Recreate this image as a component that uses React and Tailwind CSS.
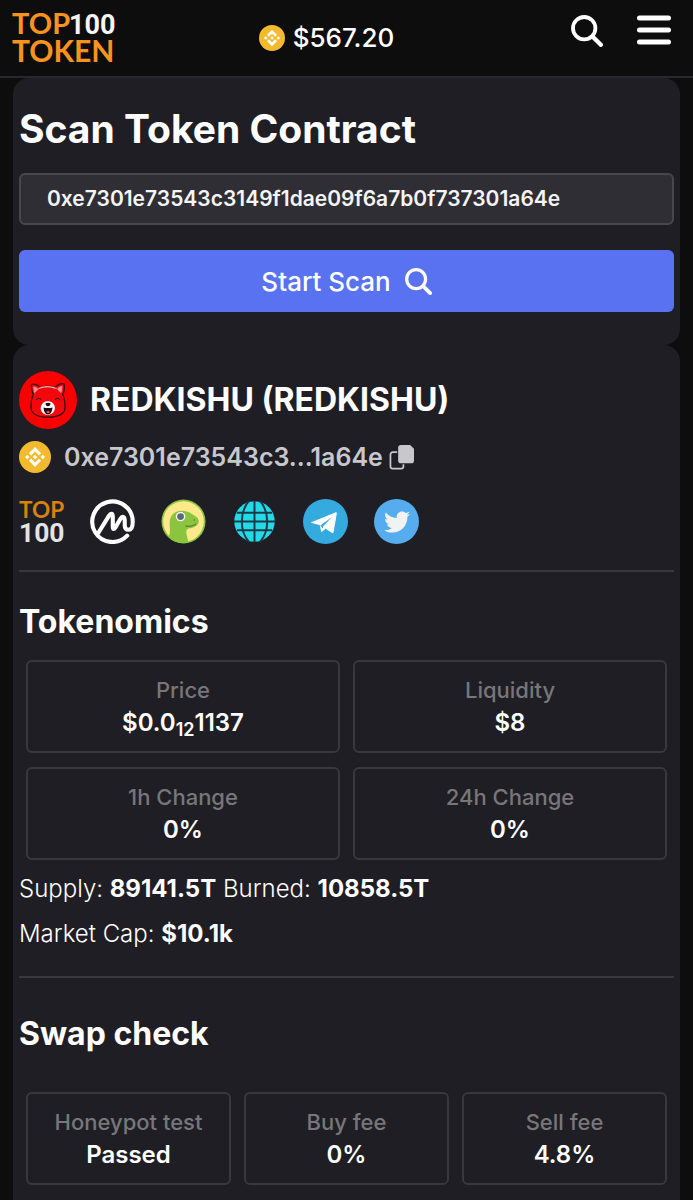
import { FaTwitter } from "react-icons/fa";

function SearchIcon({ className }) {
  return (
    <svg viewBox="0 0 32 32" fill="none" stroke="currentColor" strokeLinecap="round" className={className} aria-hidden="true">
      <circle cx="13.200" cy="13.200" r="11.200" strokeWidth="3.800" />
      <path d="M21.500 21.500 29.800 29.800" strokeWidth="4.300" />
    </svg>
  );
}

function MenuIcon() {
  return (
    <svg viewBox="0 0 34 30" fill="none" stroke="currentColor" strokeWidth="5" strokeLinecap="round" className="h-[30px] w-[34px]" aria-hidden="true">
      <path d="M2.500 3h29M2.500 15h29M2.500 27h29" />
    </svg>
  );
}

function BnbIcon({ className }) {
  return (
    <svg viewBox="0 0 32 32" className={className} aria-hidden="true">
      <circle cx="16" cy="16" r="16" fill="#f3ba2f" />
      <path
        fill="#fff"
        d="M12.116 14.404 16 10.52l3.886 3.886 2.26-2.26L16 6l-6.144 6.144 2.26 2.26zM6 16l2.26-2.26L10.52 16l-2.26 2.26L6 16zm6.116 1.596L16 21.48l3.886-3.886 2.26 2.259L16 26l-6.144-6.144-.003-.003 2.263-2.257zM21.48 16l2.26-2.26L26 16l-2.26 2.26L21.48 16zm-3.188-.002h.002V16L16 18.294l-2.291-2.29-.004-.004.004-.003.401-.402.195-.195L16 13.706l2.293 2.293z"
      />
    </svg>
  );
}

function Logo() {
  return (
    <svg viewBox="0 0 102 54" className="h-[54px] w-[102px] overflow-visible" fontFamily="Lato, sans-serif">
      <text x="0" y="22" fontSize="29" fontWeight="700" fill="#f7931e">TOP</text>
      <text x="57" y="22" fontSize="27" fontWeight="700" fontFamily="Roboto, sans-serif" fill="#f5f5f5">100</text>
      <text x="0" y="50" fontSize="30" fontWeight="700" fill="#f7931e">TOKEN</text>
    </svg>
  );
}

function Top100Icon() {
  return (
    <svg viewBox="0 0 46 46" className="size-[45px] overflow-visible" aria-hidden="true">
      <text x="0" y="19" fontSize="23" fontWeight="700" fontFamily="Lato, sans-serif" fill="#d9820f">TOP</text>
      <text x="0" y="44" fontSize="27" fontWeight="700" fontFamily="Roboto, sans-serif" fill="#e4e4e6">100</text>
    </svg>
  );
}

function TokenAvatar() {
  return (
    <svg viewBox="0 0 58 58" className="size-[58px]" aria-hidden="true">
      <circle cx="29" cy="29" r="29" fill="#fb0000" />
      <path
        d="M12.500 13.500c3-1.300 7 1 9 3.200 4.500-1.700 10-1.700 14.500 0 2.500-2.700 6-4.700 9-3.700.8 4 .2 7.500-1.300 10.500 1.800 4 2.500 9 2.300 13.500-.2 6-7.500 9.200-17 9.200s-16.800-3-17-9.200c-.2-5 .5-9.500 2.300-13.500-1.500-3-2.300-6.500-1.800-10z"
        fill="#f5060c"
        stroke="#2b0508"
        strokeWidth="1.200"
      />
      <path d="M14.500 15.500c2 0 3.700 1.300 5 2.700l-4 4c-.9-2-1.300-4.400-1-6.700zM43.300 15c-2 0-4 1.300-5.200 2.900l4 4.300c1-2 1.400-4.900 1.200-7.200z" fill="#f58f8f" />
      <path d="M19.500 17.500c6-2.500 12-2.500 18 0" fill="none" stroke="#ffb3b3" strokeWidth="1.200" />
      <path d="M17 29c1.500-2 4-2 5.300-.3M36 28.700c1.500-1.800 4-1.700 5.300.3" fill="none" stroke="#2b0508" strokeWidth="1" />
      <path d="M24 32c1.500-2.500 8-2.500 9.800 0 2.500 2.500 2.800 6 1 8.500-2.800 4.500-9.500 4.500-12.200 0-1.600-2.500-1.200-6 1.400-8.500z" fill="#fff" />
      <path d="M26.500 32.500c1.500-1 3.500-1 5 0 .3 1.500-1.500 2.800-2.500 2.800s-2.800-1.300-2.500-2.800zM24.500 36.500c3 .7 6 .7 9 0-.2 3.500-1.700 7-4.500 7s-4.300-3.500-4.500-7z" fill="#1d0b10" />
      <path d="M27.300 40.700c1-1 2.500-1 3.500 0-.5 1.800-3 1.800-3.500 0z" fill="#f0626c" />
    </svg>
  );
}

function CoinMarketCapIcon() {
  return (
    <svg viewBox="0 0 46 46" className="size-[45px]" fill="none" stroke="#fff" strokeWidth="4.200" strokeLinecap="round" strokeLinejoin="round" aria-hidden="true">
      <path d="M38 37.500A20.700 20.700 0 1 1 43.700 23c0 6.500-1.700 8.500-4.200 8.500s-4-1.700-4-4.500v-5c0-4.500-2.500-5-4.500-1.500l-5 8.500c-1.500 2.500-2.700 2-2.700-.7v-10c0-4-2-4.300-4-1L8 35.500" />
    </svg>
  );
}

function CoinGeckoIcon() {
  return (
    <svg viewBox="0 0 46 46" className="size-[45px]" aria-hidden="true">
      <circle cx="23" cy="23" r="22.500" fill="#8bc53f" />
      <circle cx="23" cy="23" r="20.800" fill="#ffe98b" />
      <path d="M8 38.500c2-5 .8-9 .8-14 0-7.500 5-12.500 12-12.500 4 0 7.500.8 10.500 3 3 2.200 7 3.500 7.300 7.500.3 4.500-4.600 6.500-9.100 7.500-3 .6-4 2-3.500 5 .4 3.500 1.500 6 2 9C20 46 11.500 43.500 8 38.500z" fill="#8bc53f" />
      <path d="M25 27.500c4 1 8 .3 11-2.200" fill="none" stroke="#4d6b2b" strokeWidth="1" />
      <circle cx="20" cy="18" r="4.800" fill="#fff" />
      <circle cx="20" cy="18" r="3.500" fill="#5a6875" />
      <circle cx="34" cy="21.500" r=".7" fill="#4d6b2b" />
    </svg>
  );
}

function GlobeIcon() {
  return (
    <svg viewBox="0 0 46 46" className="size-[45px]" aria-hidden="true">
      <circle cx="23" cy="23" r="20.700" fill="#26d9e8" />
      <g fill="none" stroke="#1a3a45" strokeWidth="2">
        <path d="M23 2v42M2 23h42M5 14h36M5 32h36" />
        <path d="M17.500 2c-10 11-10 31 0 42M28.500 2c10 11 10 31 0 42" />
      </g>
    </svg>
  );
}

function TelegramIcon() {
  return (
    <svg viewBox="0 0 46 46" className="size-[45px]" aria-hidden="true">
      <circle cx="23" cy="23" r="23" fill="#34aadf" />
      <path d="M9 23.500 33 13.700c1-.4 1.700.1 1.500 1.300l-3.200 18.700c-.2 1.300-1 1.600-2 .9l-10.800-7.600L9 24.600c-.9-.3-.9-.8 0-1.100z" fill="#fff" />
      <path d="M17.300 26.500 29.500 18.700 21 28.200 23.200 30.200 19.800 33.300c-.8.700-1.400.4-1.500-.7z" fill="#fff" />
      <path d="M17.800 26.800 29.500 18.700 20.800 27.500 20 30.500z" fill="#34aadf" />
    </svg>
  );
}

function TwitterIcon() {
  return (
    <span className="flex size-[45px] items-center justify-center rounded-full bg-[#55acee]">
      <FaTwitter className="size-[26px] text-[#f1f2f2]" aria-hidden="true" />
    </span>
  );
}

function CopyIcon() {
  return (
    <svg viewBox="0 0 26 26" className="size-[25px]" aria-hidden="true">
      <path d="M8.500 7.500H4a2.500 2.500 0 0 0-2.500 2.500v12A2.500 2.500 0 0 0 4 24.500h8.500A2.500 2.500 0 0 0 15 22v-2" fill="none" stroke="#c8c8cc" strokeWidth="1.800" />
      <path d="M12.500 0H22l4 4v12a3 3 0 0 1-3 3H12.500a3 3 0 0 1-3-3V3a3 3 0 0 1 3-3z" fill="#c8c8cc" />
    </svg>
  );
}

const socials = [
  { label: "Top100Token", Icon: Top100Icon },
  { label: "CoinMarketCap", Icon: CoinMarketCapIcon },
  { label: "CoinGecko", Icon: CoinGeckoIcon },
  { label: "Website", Icon: GlobeIcon },
  { label: "Telegram", Icon: TelegramIcon },
  { label: "Twitter", Icon: TwitterIcon }
];

const tokenomics = [
  { label: "Price", value: <>$0.0<sub className="text-lg leading-none">12</sub>1137</> },
  { label: "Liquidity", value: "$8" },
  { label: "1h Change", value: "0%" },
  { label: "24h Change", value: "0%" }
];

const swapCheck = [
  { label: "Honeypot test", value: "Passed" },
  { label: "Buy fee", value: "0%" },
  { label: "Sell fee", value: "4.8%" }
];

function Stat({ label, value }) {
  return (
    <div className="rounded-md border-2 border-[#38383d] px-2 py-3 text-center">
      <p className="text-[22px] leading-[33px] font-medium text-[#77777b]">{label}</p>
      <p className="text-2xl leading-8 font-semibold text-white">{value}</p>
    </div>
  );
}

export default function App() {
  return (
    <div className="min-h-screen bg-[#0d0d0d] font-['Inter',sans-serif] text-white">
      <header className="flex h-[78px] items-start border-b-2 border-[#29292d] pr-[22px] pl-3">
        <a href="#" aria-label="Top100Token" className="mt-3">
          <Logo />
        </a>
        <div className="mt-5 flex flex-1 items-center justify-center gap-2 pr-8">
          <BnbIcon className="size-[26px]" />
          <span className="text-[26px] leading-9 font-medium">$567.20</span>
        </div>
        <div className="mt-[15px] flex items-start gap-[34px]">
          <button type="button" aria-label="Search">
            <SearchIcon className="size-8" />
          </button>
          <button type="button" aria-label="Menu">
            <MenuIcon />
          </button>
        </div>
      </header>

      <main className="px-[13px]">
        <section className="rounded-2xl bg-[#1f1e24] px-[6px] pt-6 pb-[33px]">
          <h1 className="text-[39px] leading-[54px] font-bold">Scan Token Contract</h1>
          <form onSubmit={(e) => e.preventDefault()}>
            <input
              type="text"
              aria-label="Token contract"
              defaultValue="0xe7301e73543c3149f1dae09f6a7b0f737301a64e"
              className="mt-[17px] block h-[52px] w-full rounded-md border-2 border-[#47474c] bg-[#2f2e34] px-[26px] pb-[2px] text-[21px] font-semibold text-[#f4f4f5]"
            />
            <button type="submit" className="mt-[25px] flex h-[62px] w-full items-center justify-center gap-[14px] rounded-md bg-[#5872f1] text-[26px] font-medium">
              Start Scan
              <SearchIcon className="size-[27px]" />
            </button>
          </form>
        </section>

        <section className="rounded-t-2xl bg-[#1f1e24] px-[6px] pt-[26px] pb-[15px]">
          <div className="flex items-center gap-[13px]">
            <TokenAvatar />
            <h2 className="text-[32px] leading-10 font-bold">REDKISHU (REDKISHU)</h2>
          </div>
          <div className="mt-3 flex items-center gap-[13px]">
            <BnbIcon className="size-8" />
            <div className="flex items-center gap-[6px]">
              <span className="text-[25px] leading-8 font-semibold text-[#c8c8cc]">0xe7301e73543c3...1a64e</span>
              <button type="button" aria-label="Copy address">
                <CopyIcon />
              </button>
            </div>
          </div>
          <div className="mt-[26px] flex gap-[26px]">
            {socials.map(({ label, Icon }) => (
              <a key={label} href="#" aria-label={label}>
                <Icon />
              </a>
            ))}
          </div>

          <hr className="mt-[26px] border-t-2 border-[#38383d]" />

          <h2 className="mt-7 text-[32px] leading-[44px] font-bold">Tokenomics</h2>
          <div className="mt-4 grid grid-cols-2 gap-x-[13px] gap-y-[14px] px-[7px]">
            {tokenomics.map((item) => (
              <Stat key={item.label} {...item} />
            ))}
          </div>
          <div className="mt-[6px] text-2xl leading-[45px] font-light">
            <p>
              Supply: <b className="font-bold">89141.5T</b> Burned: <b className="font-bold">10858.5T</b>
            </p>
            <p>
              Market Cap: <b className="font-bold">$10.1k</b>
            </p>
          </div>

          <hr className="mt-5 border-t-2 border-[#38383d]" />

          <h2 className="mt-[34px] text-[32px] leading-[44px] font-bold">Swap check</h2>
          <div className="mt-9 grid grid-cols-3 gap-[13px] px-[7px]">
            {swapCheck.map((item) => (
              <Stat key={item.label} {...item} />
            ))}
          </div>
        </section>
      </main>
    </div>
  );
}
